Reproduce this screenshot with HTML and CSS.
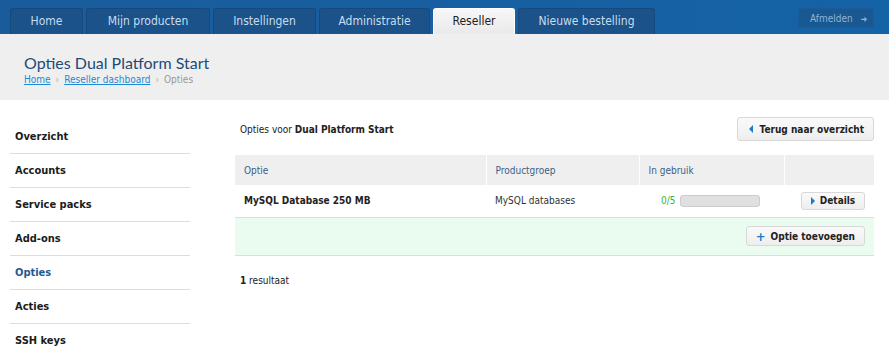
FILE: index.html
```html
<!DOCTYPE html>
<html lang="nl">
<head>
    <meta charset="UTF-8">
    <title>Opties Dual Platform Start</title>
    <link rel="stylesheet" href="styles.css">
</head>
<body>
    <div class="topbar">
        <nav class="tabs">
            <a class="tab tab-home" href="#">Home</a>
            <a class="tab tab-products" href="#">Mijn producten</a>
            <a class="tab tab-settings" href="#">Instellingen</a>
            <a class="tab tab-admin" href="#">Administratie</a>
            <a class="tab tab-reseller active" href="#">Reseller</a>
            <a class="tab tab-order" href="#">Nieuwe bestelling</a>
        </nav>
        <a class="logout" href="#">Afmelden <span class="arrow">&#10140;</span></a>
    </div>

    <div class="header">
        <h1>Opties Dual Platform Start</h1>
        <div class="crumbs">
            <a href="#">Home</a><span class="sep">&#8250;</span><a href="#">Reseller dashboard</a><span class="sep">&#8250;</span><span class="current">Opties</span>
        </div>
    </div>

    <div class="page">
        <ul class="sidebar">
            <li><a href="#">Overzicht</a></li>
            <li><a href="#">Accounts</a></li>
            <li><a href="#">Service packs</a></li>
            <li><a href="#">Add-ons</a></li>
            <li><a class="current" href="#">Opties</a></li>
            <li><a href="#">Acties</a></li>
            <li><a href="#">SSH keys</a></li>
        </ul>

        <div class="main">
            <div class="main-top">
                <p>Opties voor <b>Dual Platform Start</b></p>
                <button class="btn"><span class="icon-left"></span>Terug naar overzicht</button>
            </div>

            <table class="grid">
                <thead>
                    <tr>
                        <th class="col-opt">Optie</th>
                        <th class="col-group">Productgroep</th>
                        <th class="col-use">In gebruik</th>
                        <th class="col-act"></th>
                    </tr>
                </thead>
                <tbody>
                    <tr>
                        <td class="name">MySQL Database 250 MB</td>
                        <td>MySQL databases</td>
                        <td class="usage"><span class="count">0/5</span><span class="bar"><span class="fill" style="width: 0%"></span></span></td>
                        <td class="act"><button class="btn btn-small btn-details"><span class="icon-right"></span>Details</button></td>
                    </tr>
                    <tr class="add-row">
                        <td colspan="4"><button class="btn btn-small"><span class="icon-plus">+</span>Optie toevoegen</button></td>
                    </tr>
                </tbody>
            </table>

            <p class="results"><b>1</b> resultaat</p>
        </div>
    </div>
</body>
</html>
```

FILE: styles.css
```css
* { margin: 0; padding: 0; box-sizing: border-box; }
body { background: #fff; color: #222; font-family: 'DejaVu Sans Condensed', 'DejaVu Sans', Verdana, sans-serif; font-size: 10px; }
a { text-decoration: none; }

.topbar {
    height: 34px;
    background: linear-gradient(90deg, #1a5c9b, #1463a6);
    display: flex;
    justify-content: space-between;
    align-items: flex-end;
    padding: 0 15px 0 10px;
}

.tabs { display: flex; gap: 3px; }

.tab {
    height: 26px;
    line-height: 25px;
    text-align: center;
    color: #c9dcee;
    font-size: 12px;
    background: #1b5289;
    border: 1px solid #174a7c;
    border-bottom: none;
    border-radius: 3px 3px 0 0;
}

.tab-home { width: 73px; }
.tab-products { width: 124px; }
.tab-settings { width: 103px; }
.tab-admin { width: 111px; }
.tab-reseller { width: 82px; }
.tab-order { width: 137px; }

.tab.active {
    background: linear-gradient(#f7f7f7, #e9e9e9);
    border-color: #fff;
    color: #222;
}

.logout {
    align-self: center;
    margin-top: 2px;
    width: 76px;
    height: 20px;
    line-height: 19px;
    padding-left: 11px;
    background: #195890;
    border: 1px solid #1a5d98;
    border-radius: 3px;
    color: #8db5d8;
    font-size: 10px;
}
.logout .arrow { font-size: 9px; margin-left: 5px; color: #8db5d8; }

.header {
    background: #efefef;
    height: 66px;
    padding: 18px 24px 0;
}

.header h1 {
    font-family: Lato, 'Open Sans', sans-serif;
    font-weight: normal;
    font-size: 16px;
    color: #1e4a78;
    line-height: 22px;
}

.crumbs { font-size: 10px; color: #999; }
.crumbs a { color: #1d8ad8; text-decoration: underline; }
.crumbs .sep { color: #aaa; margin: 0 5px; }

.page { display: flex; padding: 20px 15px 0 10px; }

.sidebar { list-style: none; width: 180px; }
.sidebar li { border-bottom: 1px solid #ddd; }
.sidebar li:last-child { border-bottom: none; }
.sidebar a {
    display: block;
    height: 33px;
    line-height: 34px;
    padding-left: 5px;
    font-weight: bold;
    font-size: 11px;
    color: #1b1b1b;
}
.sidebar a.current { color: #1f5a92; }

.main { flex: 1; margin-left: 45px; }

.main-top {
    display: flex;
    justify-content: space-between;
    align-items: center;
    height: 24px;
    margin-top: -3px;
    margin-bottom: 14px;
}
.main-top p { padding-left: 5px; }

.btn {
    font-family: 'DejaVu Sans Condensed', 'DejaVu Sans', sans-serif;
    font-weight: bold;
    font-size: 10px;
    color: #222;
    height: 24px;
    padding: 0 9px 0 11px;
    background: linear-gradient(#fafafa, #eeeeee);
    border: 1px solid #d8d8d8;
    border-radius: 3px;
    display: inline-flex;
    align-items: center;
}

.btn-small { height: 20px; padding: 0 9px 0 9px; }
.btn-details { height: 18px; }

.icon-left, .icon-right {
    display: inline-block;
    width: 0;
    height: 0;
    border-top: 4px solid transparent;
    border-bottom: 4px solid transparent;
    margin-right: 7px;
}
.icon-left { border-right: 4px solid #1a7bc8; }
.icon-right { border-left: 4px solid #1a7bc8; margin-right: 5px; }
.icon-plus { color: #1a7bc8; font-size: 13px; margin-right: 5px; }

.grid { width: 100%; border-collapse: collapse; }
.grid th {
    background: #efefef;
    height: 30px;
    text-align: left;
    font-weight: normal;
    color: #3b5f88;
    padding-left: 9px;
    border-left: 1px solid #fff;
}
.grid th:first-child { border-left: none; }
.col-opt { width: 251px; }
.col-group { width: 153px; }
.col-use { width: 145px; }

.grid td {
    height: 32px;
    padding-left: 9px;
    border-bottom: 1px solid #ddd;
    color: #333;
}
.grid td.name { font-weight: bold; color: #222; }

.usage { padding-left: 22px !important; }
.count { color: #33b833; margin-right: 5px; vertical-align: middle; }
.bar {
    display: inline-block;
    width: 80px;
    height: 12px;
    background: #e0e0e0;
    border: 1px solid #ccc;
    border-radius: 3px;
    vertical-align: middle;
}
.fill { display: block; height: 100%; background: #5bb85b; }

.act { text-align: center; padding-left: 8px !important; }

.add-row td {
    background: #eafcef;
    height: 38px;
    text-align: right;
    padding-right: 9px;
}

.results { margin-top: 19px; padding-left: 5px; }
```
